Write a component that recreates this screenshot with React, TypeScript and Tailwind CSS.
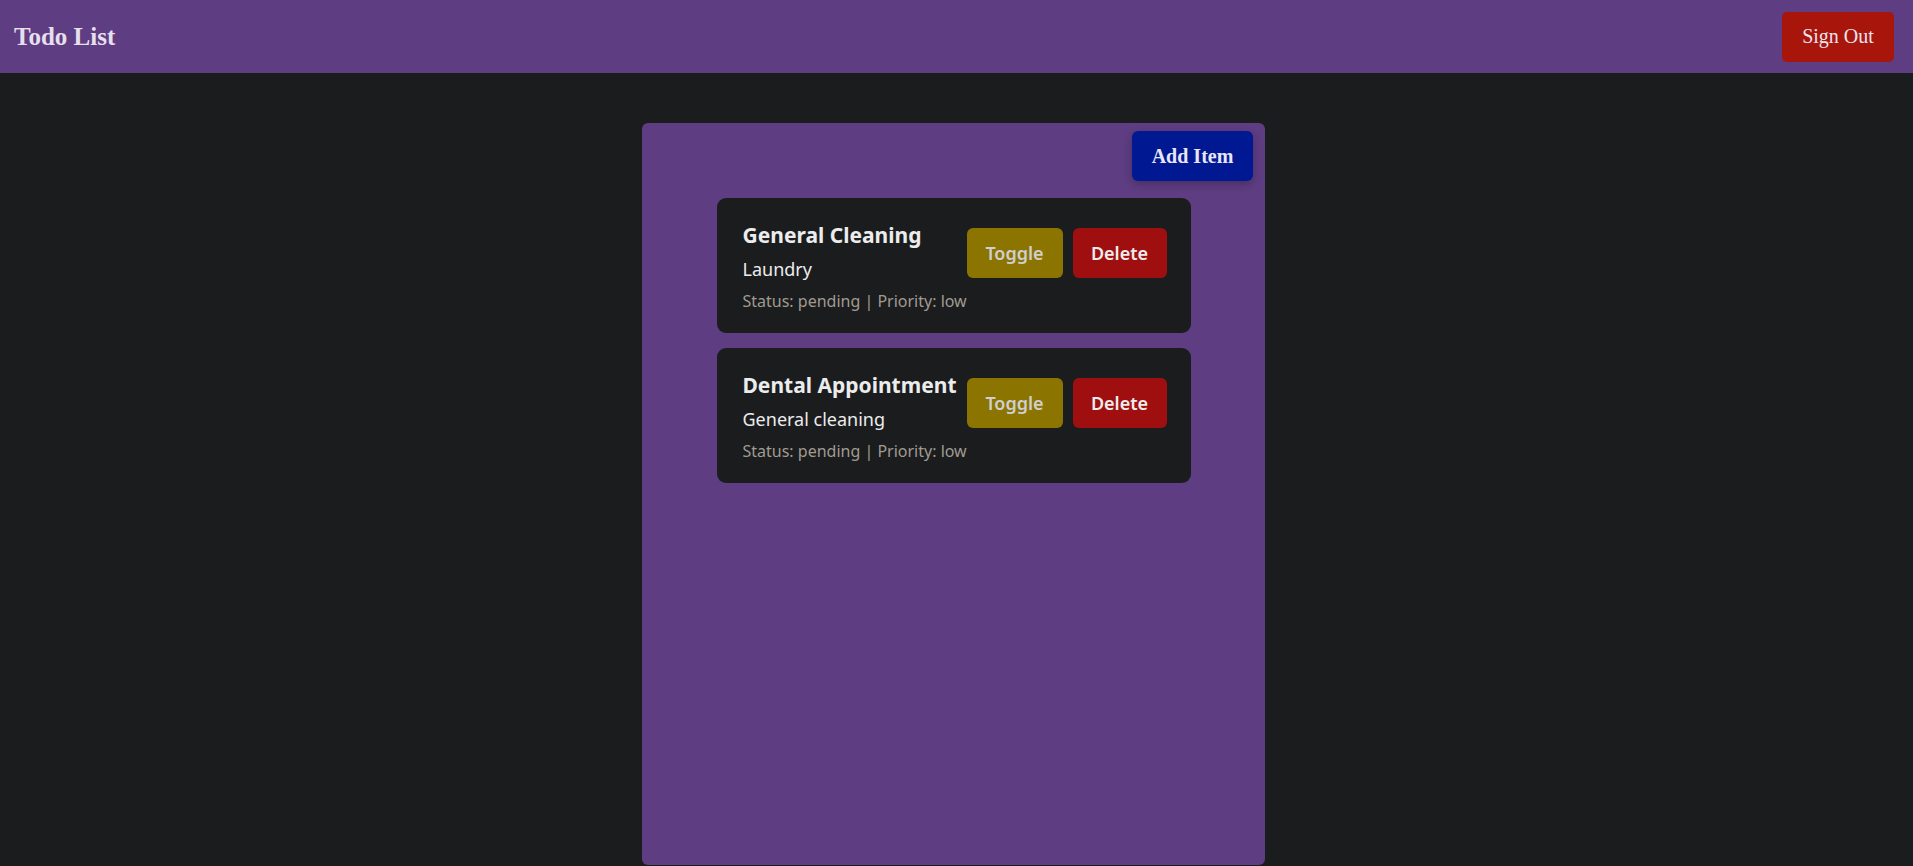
const todos = [
  { id: 1, title: 'General Cleaning', description: 'Laundry', status: 'pending', priority: 'low' },
  { id: 2, title: 'Dental Appointment', description: 'General cleaning', status: 'pending', priority: 'low' },
];

const serif = "font-['Liberation_Serif','Times_New_Roman',serif]";
const sans = "font-['Noto_Sans','Open_Sans',sans-serif]";

function TodoCard({ todo }: { todo: (typeof todos)[number] }) {
  return (
    <div className={`${sans} w-[474px] mx-auto rounded-[9px] bg-[#1b1c1e] pl-[26px] pr-6 pt-6 pb-5 flex justify-between items-start`}>
      <div className="flex flex-col min-w-0 whitespace-nowrap">
        <h3 className="text-[21px] leading-[26px] font-bold text-[#ececec]">{todo.title}</h3>
        <p className="mt-2 text-[18px] leading-[27px] text-[#ececec]">{todo.description}</p>
        <p className="mt-[6px] text-[16px] leading-[24px] text-[#a09b91]">
          Status: {todo.status} | Priority: {todo.priority}
        </p>
      </div>
      <div className="flex shrink-0 gap-[10px] mt-[6px]">
        <button className="w-[96px] h-[50px] rounded-[6px] bg-[#8c7400] text-[18px] font-semibold text-[#cfcfcf]">
          Toggle
        </button>
        <button className="w-[94px] h-[50px] rounded-[6px] bg-[#a00f10] text-[18px] font-semibold text-[#ececec]">
          Delete
        </button>
      </div>
    </div>
  );
}

export default function App() {
  return (
    <div className="min-h-screen bg-[#1b1c1e] flex flex-col">
      <header className={`${serif} h-[73px] bg-[#5e3d82] flex items-center justify-between pl-[14px] pr-[19px]`}>
        <h1 className="text-[25px] font-bold text-[#e6dfec]">Todo List</h1>
        <button className="w-[112px] h-[50px] pb-[2px] rounded-[5px] bg-[#a8150b] text-[20px] text-[#ece4f0]">
          Sign Out
        </button>
      </header>

      <main className="flex-1 flex justify-center pt-[50px] pr-[6px]">
        <section className="w-[623px] h-[742px] rounded-[6px] bg-[#5e3d82] flex flex-col pt-2">
          <div className="flex justify-end pr-3">
            <button
              className={`${serif} w-[121px] h-[50px] rounded-[6px] bg-[#001993] text-[20px] font-bold text-[#e8e6f4] shadow-[0_3px_8px_rgba(0,0,0,0.25)]`}
            >
              Add Item
            </button>
          </div>
          <div className="flex flex-col gap-[15px] mt-[17px]">
            {todos.map((todo) => (
              <TodoCard key={todo.id} todo={todo} />
            ))}
          </div>
        </section>
      </main>
    </div>
  );
}
